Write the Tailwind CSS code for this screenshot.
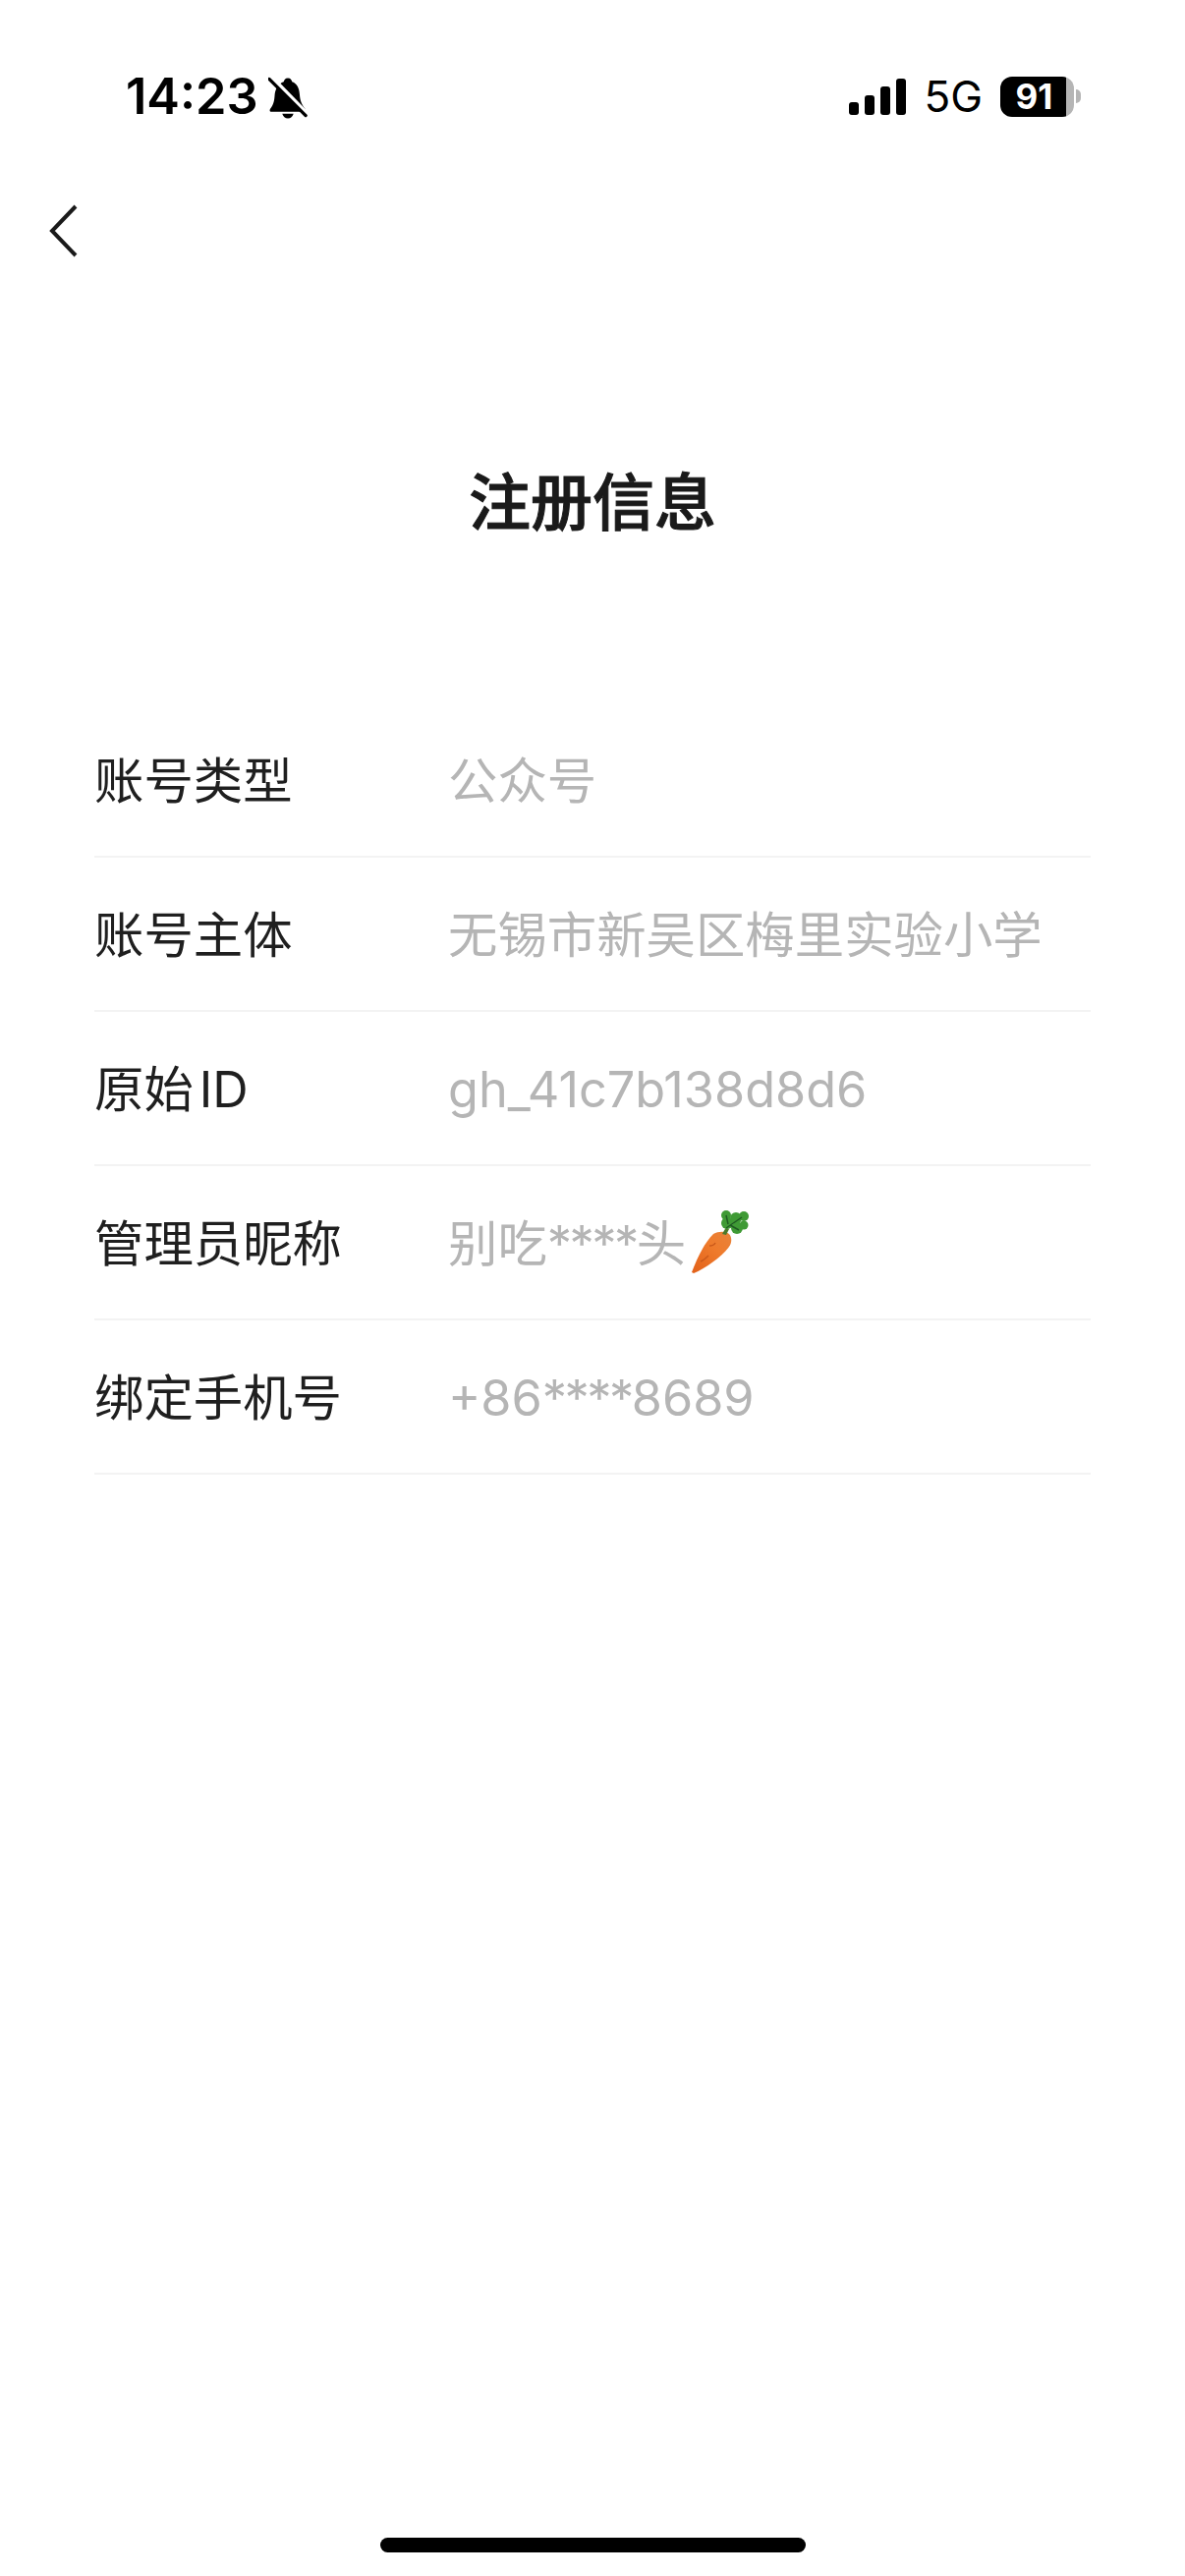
<!DOCTYPE html>
<html lang="zh-CN">
<head>
    <meta charset="UTF-8">
    <meta name="viewport" content="width=device-width, initial-scale=1.0">
    <title>注册信息</title>
    <script src="https://cdn.jsdelivr.net/npm/@tailwindcss/browser@4"></script>
</head>
<body class="bg-white font-['Inter','Noto_Sans_CJK_SC',sans-serif]">
    <div class="w-[1206px] h-[2622px] flex flex-col overflow-hidden">
        <!-- Status bar -->
        <div class="h-[160px] pt-[68px] pl-[128px] pr-[106px] flex justify-between items-start text-black">
            <div class="flex items-center h-[60px]">
                <span class="text-[50.5px] font-semibold leading-none">14:23</span>
                <svg class="ml-[10px] mt-[2px]" width="40" height="43" viewBox="0 0 42 44">
                    <path d="M21 1c3 0 4 2 4.500 4C31 7 33 12 33.500 18c.5 7 2 11 6 16 1 2 0 3-2 3H4c-2 0-3-1-2-3 4-5 4.500-9 5-16C8 12 11 7 16.500 5 17 3 18 1 21 1z" fill="#000"/>
                    <path d="M15 39h12c-1 3-3 5-6 5s-5-2-6-5z" fill="#000"/>
                    <path d="M3 0l39 40" stroke="#fff" stroke-width="5"/>
                    <path d="M1 2l39 39" stroke="#000" stroke-width="3.500" stroke-linecap="round"/>
                </svg>
            </div>
            <div class="flex items-center h-[60px]">
                <div class="flex items-end gap-[6px] h-[37px]">
                    <div class="w-[10px] h-[13px] bg-black rounded-[3px]"></div>
                    <div class="w-[10px] h-[20px] bg-black rounded-[3px]"></div>
                    <div class="w-[10px] h-[29px] bg-black rounded-[3px]"></div>
                    <div class="w-[10px] h-[37px] bg-black rounded-[3px]"></div>
                </div>
                <span class="ml-[18px] text-[44px] leading-none">5G</span>
                <div class="ml-[18px] flex items-center">
                    <div class="w-[75px] h-[41px] rounded-[12px] bg-[linear-gradient(to_right,#000_90%,#b5b5b5_90%)] text-white text-[35px] font-bold leading-none flex items-center justify-center pr-[6px]">91</div>
                    <div class="ml-[2px] w-[5px] h-[14px] bg-[#b5b5b5] rounded-r-full"></div>
                </div>
            </div>
        </div>

        <!-- Back -->
        <div class="h-[80px] pl-[50px]">
            <svg width="32" height="54" viewBox="0 0 32 54" class="mt-[48px]" fill="none">
                <path d="M27 2L3 27l24 25" stroke="#1a1a1a" stroke-width="4"/>
            </svg>
        </div>

        <!-- Title -->
        <h1 class="mt-[236px] text-center text-[63px] leading-[70px] font-medium text-[#1a1a1a] [-webkit-text-stroke:1px_#1a1a1a]">注册信息</h1>

        <!-- Info rows -->
        <div class="mt-[170px] mx-[96px] text-[50.4px] leading-[60px]">
            <div class="h-[157px] flex items-center pt-[2px] border-b-2 border-[#f3f3f3]">
                <div class="w-[360px] text-[#1f1f1f]">账号类型</div>
                <div class="text-[#b5b5b5]">公众号</div>
            </div>
            <div class="h-[157px] flex items-center pt-[2px] border-b-2 border-[#f3f3f3]">
                <div class="w-[360px] text-[#1f1f1f]">账号主体</div>
                <div class="text-[#b5b5b5]">无锡市新吴区梅里实验小学</div>
            </div>
            <div class="h-[157px] flex items-center pt-[2px] border-b-2 border-[#f3f3f3]">
                <div class="w-[360px] text-[#1f1f1f]">原始<span class="ml-[6px]">ID</span></div>
                <div class="text-[#b5b5b5]">gh_41c7b138d8d6</div>
            </div>
            <div class="h-[157px] flex items-center pt-[2px] border-b-2 border-[#f3f3f3]">
                <div class="w-[360px] text-[#1f1f1f]">管理员昵称</div>
                <div class="text-[#b5b5b5] flex items-center">
                    <span>别吃<span class="tracking-[-2.500px]">****</span>头</span>
                    <svg class="ml-[5px] -mt-[4px]" width="62" height="64" viewBox="0 0 62 64">
                        <defs>
                            <linearGradient id="carrot" x1="0" y1="1" x2="1" y2="0">
                                <stop offset="0" stop-color="#e2611a"/>
                                <stop offset="0.6" stop-color="#ef7b2c"/>
                                <stop offset="1" stop-color="#e8833a"/>
                            </linearGradient>
                        </defs>
                        <path d="M1 63C6 50 13 34 23 24c5-3 13-3 16 0 3 3 3 9 0 13C32 47 15 59 3 64z" fill="url(#carrot)"/>
                        <path d="M10 52c3-1 6-4 8-6M19 36c3 0 5-1 6-3" stroke="#c9591b" stroke-width="1.500" fill="none"/>
                        <path d="M32 24l4-7 3 2-3 6z" fill="#4b7a2b"/>
                        <g fill="#3f9a35">
                            <circle cx="36" cy="5" r="5"/>
                            <circle cx="37" cy="13" r="6"/>
                            <circle cx="46" cy="8" r="6"/>
                            <circle cx="54" cy="6" r="5"/>
                            <circle cx="47" cy="18" r="6"/>
                            <circle cx="54" cy="15" r="4.500"/>
                        </g>
                        <path d="M36 18L52 7M40 15l9 5M38 14l-2-9" stroke="#1f5c22" stroke-width="1.500" fill="none"/>
                    </svg>
                </div>
            </div>
            <div class="h-[157px] flex items-center pt-[2px] border-b-2 border-[#f3f3f3]">
                <div class="w-[360px] text-[#1f1f1f]">绑定手机号</div>
                <div class="text-[#b5b5b5]">+86<span class="tracking-[-2.500px]">****</span>8689</div>
            </div>
        </div>

        <!-- Home indicator -->
        <div class="mt-auto mb-[24px] mx-auto w-[433px] h-[15px] rounded-full bg-black"></div>
    </div>
</body>
</html>
